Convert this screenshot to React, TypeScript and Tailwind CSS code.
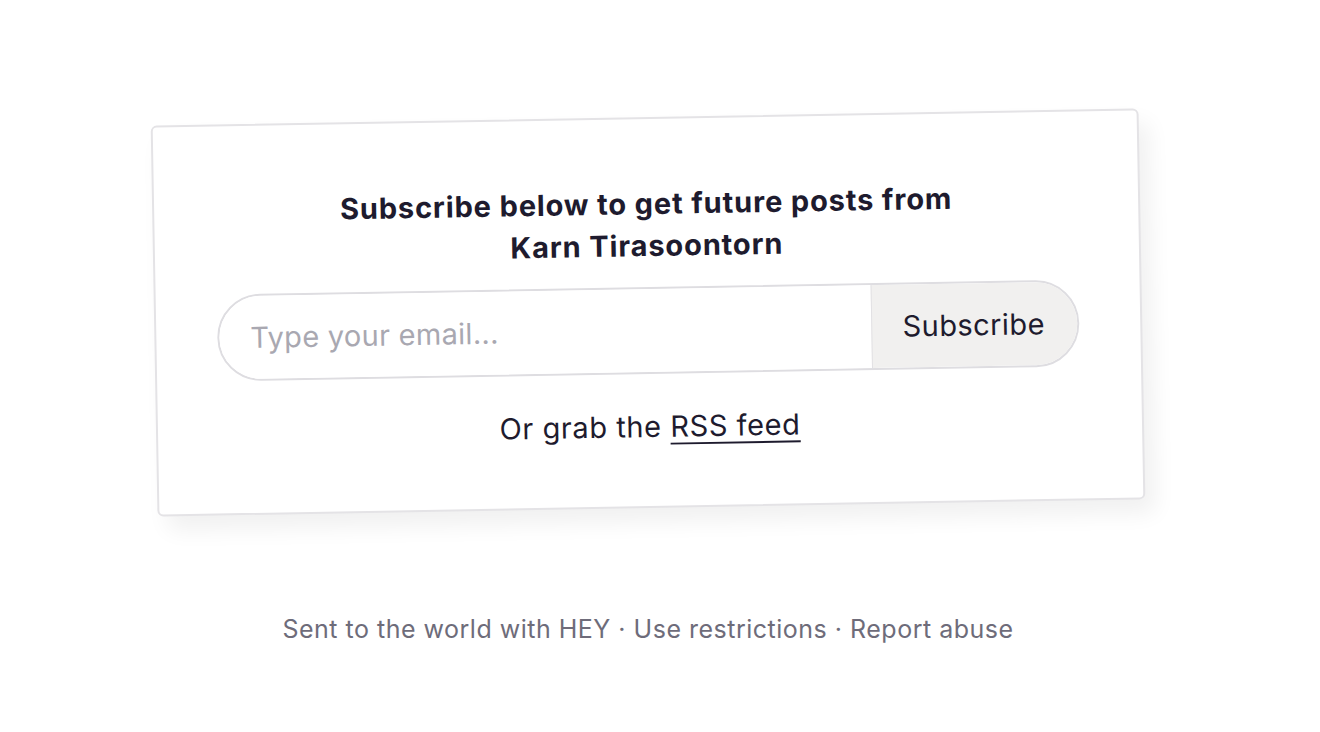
export default function App() {
  return (
    <div
      className="min-h-[732px] w-[1296px] bg-white flex flex-col items-center"
      style={{ fontFamily: 'Inter, "Noto Sans", sans-serif' }}
    >
      {/* Subscribe card, slightly tilted */}
      <div className="mt-[117px] w-[988px] h-[391px] -rotate-1 rounded-md border-2 border-[#e4e3e6] bg-white shadow-[10px_14px_22px_rgba(0,0,0,0.06)] flex flex-col items-center pt-[64px] px-[61px]">
        <h2 className="text-[29px] leading-[42px] font-bold tracking-[0.03em] text-[#1e1b2e] text-center w-[680px]">
          Subscribe below to get future posts from Karn Tirasoontorn
        </h2>
        <form className="mt-[20px] w-full h-[87px] flex rounded-full border-2 border-[#dedde1] overflow-hidden">
          <input
            type="email"
            placeholder="Type your email..."
            className="flex-1 min-w-0 pl-[31px] text-[29px] tracking-[0.01em] text-[#1e1b2e] placeholder:text-[#a9a8b1] outline-none bg-white"
          />
          <button
            type="button"
            className="w-[206px] bg-[#f1f0ef] border-l border-[#e2e1e4] text-[29px] tracking-[0.015em] text-[#1e1b2e] pr-[2px]"
          >
            Subscribe
          </button>
        </form>
        <p className="mt-[33px] text-[29px] leading-[40px] tracking-[0.02em] text-[#1e1b2e]">
          Or grab the{' '}
          <a href="#" className="underline decoration-2 underline-offset-[6px]">
            RSS feed
          </a>
        </p>
      </div>

      <footer className="mt-[103px] text-[25px] tracking-[0.02em] text-[#6e6c7a]">
        <a href="#">Sent to the world with HEY</a> · <a href="#">Use restrictions</a> ·{' '}
        <a href="#">Report abuse</a>
      </footer>
    </div>
  );
}
